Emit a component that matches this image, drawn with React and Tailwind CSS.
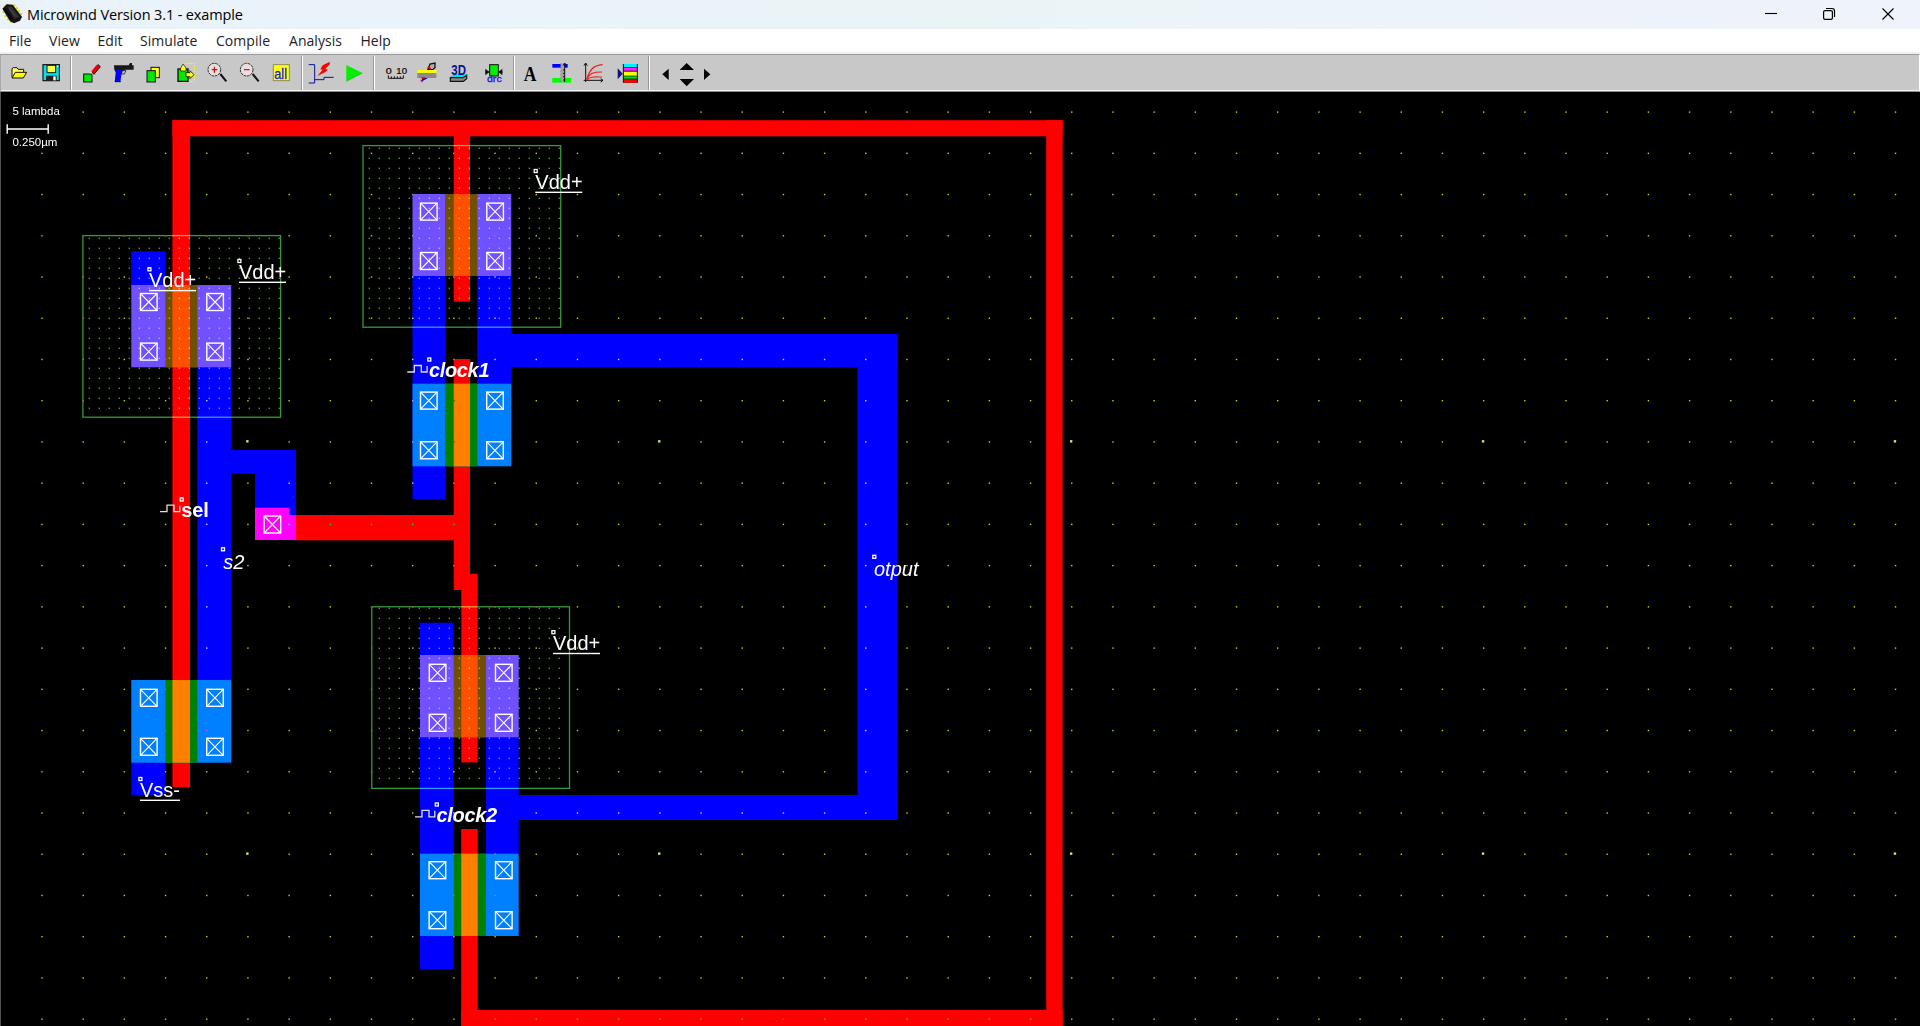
import React from "react";

/* ---------- toolbar ---------- */

/* Every tool occupies a slot; its drawing uses a 3x unit grid over the bar. */
function Tool({ x, w, children }) {
  return (
    <button className="block h-9 shrink-0" style={{ width: w }}>
      <svg className="block h-9 w-full" viewBox={`${x * 3} 165 ${w * 3} 108`}>
        {children}
      </svg>
    </button>
  );
}

function Separator() {
  return (
    <div className="flex h-9 w-1 shrink-0 py-px">
      <div className="w-px" />
      <div className="w-px bg-[#989898]" />
      <div className="w-px bg-white" />
    </div>
  );
}

function Magnifier({ x, plus }) {
  return (
    <g transform={`translate(${x} 0)`}>
      <path d="M40 222 L58 244" stroke="#111" strokeWidth="6" />
      <circle cx="22" cy="209" r="19" fill="#e8e0e0" stroke="#333" strokeWidth="3" strokeDasharray="8 2" />
      <path d="M14 209 H31" stroke="#e00000" strokeWidth="3.5" />
      {plus && <path d="M22 200 V218" stroke="#e00000" strokeWidth="3.5" />}
    </g>
  );
}

function Toolbar() {
  return (
    <div className="flex h-[38px] w-full items-start border-b-[1px] border-t border-b-[#8a8a8a] border-t-[#9a9a9a] border-l border-l-[#a8a8a8] border-r border-r-white bg-[#c8c8c8] shadow-[inset_0_-1px_0_#f4f4f4]">
      <Tool x={1} w={34}>
        <path d="M36 232 V206 L40 203 H51 L54 208 H71 V216" fill="#ffff66" stroke="#111" strokeWidth="3" />
        <path d="M36 234 L46 217 H80 L70 234 Z" fill="#ffff00" stroke="#111" strokeWidth="3" />
      </Tool>
      <Tool x={35} w={34}>
        <rect x="129" y="194" width="49" height="48" fill="#00e5f0" stroke="#111" strokeWidth="3.5" />
        <rect x="141" y="196" width="26" height="22" fill="#ffff40" stroke="#111" strokeWidth="3" />
        <rect x="138" y="227" width="32" height="15" fill="#222" />
        <rect x="160" y="229" width="7" height="12" fill="#fff" />
        <rect x="171" y="197" width="4" height="4" fill="#fff" />
      </Tool>
      <Separator />
      <Tool x={73} w={33}>
        <path d="M268 220 L276 215 L282 223 L274 229 Z" fill="#fff" />
        <path d="M276 216 L294 194 L301 200 L282 223 Z" fill="#e80000" stroke="#111" strokeWidth="3" />
        <path d="M276 215 L293 195" stroke="#ff0000" strokeWidth="5" />
        <rect x="251" y="222" width="25" height="24" fill="#00e800" stroke="#111" strokeWidth="3" />
      </Tool>
      <Tool x={106} w={32}>
        <path d="M342 196 H386 L390 189 H396 V196 H401 V209 H375 L366 222 H350 L343 209 Z" fill="#181818" />
        <path d="M367 212 H378 L373 222 H364 Z" fill="#c8c8c8" stroke="#222" strokeWidth="2.5" />
        <path d="M348 210 H366 L361 246 H344 Z" fill="#0000ff" />
        <path d="M345 245 H362" stroke="#000060" strokeWidth="3" />
      </Tool>
      <Tool x={138} w={32}>
        <rect x="453" y="202" width="25" height="31" fill="#ffff20" stroke="#111" strokeWidth="3" />
        <rect x="441" y="212" width="25" height="34" fill="#00e800" stroke="#111" strokeWidth="3" />
      </Tool>
      <Tool x={170} w={32}>
        <path d="M556 190 H583 V244 H560" fill="none" stroke="#ffff00" strokeWidth="3" strokeDasharray="5 3" />
        <rect x="534" y="207" width="30" height="37" fill="#00e800" stroke="#111" strokeWidth="4" />
        <path d="M549 192 L558 204 V213 H542 V204 Z" fill="#ffff20" stroke="#111" strokeWidth="2" />
        <path d="M582 224 L570 212 V218 H558 V230 H570 V236 Z" fill="#ffff20" stroke="#111" strokeWidth="2.5" />
      </Tool>
      <Tool x={202} w={32}><Magnifier x={621} plus /></Tool>
      <Tool x={234} w={32}><Magnifier x={718} /></Tool>
      <Tool x={266} w={34}>
        <rect x="820" y="194" width="48" height="48" fill="#ffff20" stroke="#8c8c50" strokeWidth="3" />
        <text x="823" y="236" fontSize="45" stroke="#2020d0" strokeWidth="1" textLength="38" lengthAdjust="spacingAndGlyphs" className="fill-[#2020d0] font-['Liberation_Sans']">all</text>
      </Tool>
      <Separator />
      <Tool x={304} w={34}>
        <path d="M926 194 H944 V249 H926 M944 239 H972 V232 H1001" fill="none" stroke="#101090" strokeWidth="3" />
        <path d="M988 186 L968 196 L961 208 L968 209 L952 228 L975 217 L984 209 L976 207 L990 192 Z" fill="#ff0000" />
      </Tool>
      <Tool x={338} w={34}>
        <path d="M1039 195 L1087 219 L1039 244 Z" fill="#00f000" />
        <path d="M1039 244 L1087 219" stroke="#20a020" strokeWidth="2" />
      </Tool>
      <Separator />
      <Tool x={376} w={35}>
        <g stroke="#111" strokeWidth="0.6" className="fill-black font-['Liberation_Sans']">
          <text x="1157" y="221" fontSize="25" textLength="18" lengthAdjust="spacingAndGlyphs">0</text>
          <text x="1189" y="221" fontSize="25" textLength="32" lengthAdjust="spacingAndGlyphs">10</text>
        </g>
        <path d="M1165 226 V235 H1210 V226 M1174 235 V229 M1183 235 V229 M1192 235 V229 M1201 235 V229" fill="none" stroke="#111" strokeWidth="3" />
      </Tool>
      <Tool x={411} w={31}>
        <path d="M1284 208 L1290 192 L1305 189 V203 L1298 209 Z" fill="#b0b0b0" stroke="#111" strokeWidth="4" />
        <path d="M1283 201 L1293 207" stroke="#f00000" strokeWidth="5" />
        <rect x="1252" y="210" width="57" height="9" fill="#ffff00" />
        <rect x="1252" y="219" width="57" height="15" fill="#8a8a8a" />
        <path d="M1268 234 H1284 L1262 246 Z" fill="#0000e0" />
        <path d="M1264 234 H1276" stroke="#f00000" strokeWidth="4" />
        <path d="M1261 240 L1268 246" stroke="#f00000" strokeWidth="3" />
      </Tool>
      <Tool x={442} w={34}>
        <path d="M1351 231 L1364 221 H1402 V235 L1392 243 H1351 Z" fill="#00e0e8" />
        <path d="M1351 233 H1389 L1400 226 V236 L1390 244 H1351 Z" fill="#888" stroke="#111" strokeWidth="3.5" />
        <text x="1354" y="226" fontSize="46" textLength="44" lengthAdjust="spacingAndGlyphs" className="fill-[#101090] font-['Liberation_Sans'] font-bold">3D</text>
      </Tool>
      <Tool x={476} w={36}>
        <path d="M1455 216 H1508" stroke="#111" strokeWidth="3" />
        <path d="M1456 206 L1468 216 L1456 226 Z M1507 206 L1495 216 L1507 226 Z" fill="#111" />
        <rect x="1469" y="194" width="26" height="34" fill="#00f000" stroke="#111" strokeWidth="3" />
        <text x="1461" y="247" fontSize="26" stroke="#1010ff" strokeWidth="0.8" textLength="44" lengthAdjust="spacingAndGlyphs" className="fill-[#1010ff] font-['Liberation_Sans']">drc</text>
      </Tool>
      <Separator />
      <Tool x={516} w={30}>
        <text x="1571" y="242" fontSize="64" textLength="38" lengthAdjust="spacingAndGlyphs" className="fill-black font-['Liberation_Serif'] font-bold">A</text>
      </Tool>
      <Tool x={546} w={32}>
        <rect x="1657" y="192" width="46" height="11" fill="#0000ff" />
        <rect x="1657" y="234" width="56" height="14" fill="#00ff00" />
        <rect x="1682" y="190" width="12" height="57" fill="#a8a8a8" />
        <path d="M1683 190 V246" stroke="#777" strokeWidth="2" strokeDasharray="6 4" />
        <path d="M1694 190 V246" stroke="#111" strokeWidth="3" />
        <path d="M1689 197 L1694 189 L1699 197 M1689 210 H1694 M1689 220 H1694 M1689 230 H1694 M1689 240 H1694" fill="none" stroke="#111" strokeWidth="3" />
      </Tool>
      <Tool x={578} w={32}>
        <path d="M1757 189 V246 M1752 197 L1757 189 L1762 197 M1751 241 H1809 M1802 236 L1809 241 L1802 247" fill="none" stroke="#111" strokeWidth="3" />
        <path d="M1760 238 C1768 214 1776 196 1808 194 M1760 239 C1770 218 1780 216 1806 216 M1762 239 C1772 229 1782 231 1806 231" fill="none" stroke="#f02020" strokeWidth="3.5" />
      </Tool>
      <Tool x={610} w={37}>
        <path d="M1853 205 L1868 221 L1853 238 Z" fill="#101080" />
        <path d="M1869 192 H1913 V248 H1869 Z" fill="#111" />
        <rect x="1871" y="192" width="40" height="10" fill="#00f0ff" />
        <rect x="1871" y="204" width="40" height="8" fill="#ff20ff" />
        <rect x="1871" y="215" width="40" height="12" fill="#ffff00" />
        <rect x="1871" y="229" width="40" height="7" fill="#00e000" />
        <rect x="1871" y="238" width="40" height="10" fill="#ff0000" />
        <path d="M1870 192 V248 M1912 192 V248" stroke="#102080" strokeWidth="3" />
      </Tool>
      <Separator />
      <Tool x={651} w={22}><path d="M1987 223 L2006 206 V240 Z" fill="#000" /></Tool>
      <Tool x={673} w={27}>
        <path d="M2039 210 L2060 189 L2082 210 Z M2039 237 H2082 L2060 259 Z" fill="#000" />
      </Tool>
      <Tool x={700} w={22}><path d="M2112 206 L2131 223 L2112 240 Z" fill="#000" /></Tool>
    </div>
  );
}

/* ---------- title and menus ---------- */

function ChipIcon() {
  return (
    <svg className="h-[29px] w-6" viewBox="0 0 72 87">
      <path d="M12 22 L24 14 M8 38 L13 34 M14 50 L20 45 M22 60 L27 55 M31 68 L35 63 M40 14 L45 19 M48 22 L53 27 M55 31 L60 35 M61 40 L66 43 M58 58 L65 50" stroke="#e0d800" strokeWidth="6" />
      <path d="M7 26 L20 13 L38 14 L66 50 L60 62 L42 70 L30 64 Z" fill="#141414" />
      <path d="M22 20 L34 18 L58 50 L44 56 Z" fill="#303030" />
      <path d="M14 28 L38 60" stroke="#050505" strokeWidth="5" />
      <path d="M28 25 L46 48" stroke="#4c4c4c" strokeWidth="3" />
    </svg>
  );
}

function TitleBar() {
  return (
    <header className="flex h-[29px] items-center justify-between bg-linear-to-r from-[#eaf3fb] via-[#eaf4f7] to-[#eff3fb]">
      <div className="flex items-center">
        <ChipIcon />
        <h1 className="ml-[3px] whitespace-nowrap text-[14.5px] font-normal leading-[28px] tracking-[-0.13px] text-black">Microwind Version 3.1 - example</h1>
      </div>
      <div className="flex h-full items-center">
        <svg className="h-[29px] w-[58px]" viewBox="0 0 58 29"><path d="M23 13.5 H35" stroke="#000" strokeWidth="1.1" /></svg>
        <svg className="h-[29px] w-[59px]" viewBox="0 0 59 29" fill="none" stroke="#000" strokeWidth="1.2">
          <rect x="23.6" y="10.6" width="8.8" height="8.8" rx="1.4" />
          <path d="M26 8.5 H32 Q34.5 8.5 34.5 11 V17" />
        </svg>
        <svg className="h-[29px] w-[61px]" viewBox="0 0 61 29"><path d="M23.5 8.5 L34.5 19.5 M34.5 8.5 L23.5 19.5" stroke="#000" strokeWidth="1.2" /></svg>
      </div>
    </header>
  );
}

function MenuBar() {
  const item = "shrink-0 whitespace-nowrap";
  return (
    <nav className="flex h-[25px] items-start bg-white pl-[9px] text-[14px] leading-[23px] tracking-[0.05px] text-[#222] shadow-[inset_0_-2px_0_#f0f0f0]">
      <span className={`${item} w-10`}>File</span>
      <span className={`${item} w-[48.5px]`}>View</span>
      <span className={`${item} w-[42.5px]`}>Edit</span>
      <span className={`${item} w-[76px]`}>Simulate</span>
      <span className={`${item} w-[73px]`}>Compile</span>
      <span className={`${item} w-[71.5px]`}>Analysis</span>
      <span className={item}>Help</span>
    </nav>
  );
}

/* ---------- chip layout ---------- */

/* Rectangles are [left, top, right, bottom]. */
const METAL = [
  [131.3, 251.3, 165.3, 285], [197.3, 367, 231.3, 680], [131.3, 762, 165.3, 795],
  [231, 450, 296, 473.7], [255, 450, 296, 515],
  [412.5, 276, 445, 499], [477.3, 276, 511.3, 384],
  [511, 334, 897.4, 367.3], [857.5, 334, 897.4, 820], [518, 795, 897.4, 820],
  [420, 622.7, 453.7, 969], [486, 737, 518.7, 854],
];

const POLY = [
  [172.4, 120.2, 1062.6, 136.3], [172.4, 120.2, 190, 787.3], [1046.2, 120.2, 1062.6, 1026],
  [461.2, 1010, 1062.6, 1026], [461.2, 829, 477.7, 1026],
  [453.7, 136, 470, 301.6], [453.7, 359, 470, 590], [296, 515, 454, 540.3],
  [461.3, 573.7, 477.7, 762.4],
];

const VIA = [[255, 507.7, 289, 540], [255, 515, 296, 540]];

/* Transistors: outer left/right, channel left/right, gate left/right, top/bottom. */
const DEVICES = [
  { p: true, x: [131.3, 231.3], c: [165.3, 197.3], g: [172.4, 190], y: [285, 367.3] },
  { p: false, x: [131.3, 231.3], c: [165.3, 197.3], g: [172.4, 190], y: [680, 762.7] },
  { p: true, x: [412.5, 511.3], c: [445, 477.3], g: [453.7, 470], y: [194, 276] },
  { p: false, x: [412.5, 511.3], c: [445, 477.3], g: [453.7, 470], y: [383.7, 466.3] },
  { p: true, x: [420, 518.7], c: [453.7, 486], g: [461.3, 477.7], y: [655, 737.3] },
  { p: false, x: [420, 518.7], c: [453.7, 486], g: [461.3, 477.7], y: [853.7, 936] },
];

const CONTACTS = [
  [140, 293], [206.3, 293], [140, 342.6], [206.3, 342.6],
  [140, 688.8], [206.2, 688.8], [140, 737.8], [206.2, 737.8],
  [420, 202.6], [486.3, 202.6], [420, 252], [486.3, 252],
  [420, 391.6], [486.2, 391.6], [420, 441.3], [486.2, 441.3],
  [428.8, 663.8], [495, 663.8], [428.8, 713.8], [495, 713.8],
  [428.6, 861.2], [495, 861.2], [428.6, 911.2], [495, 911.2],
  [263.6, 515.5],
];

const WELLS = [
  { x: 82.9, y: 235.6, w: 197.7, h: 181.6, dx: 89.3, dy: 238.3, cols: 20 },
  { x: 363, y: 145.6, w: 197.7, h: 181.6, dx: 369.3, dy: 148.3, cols: 20 },
  { x: 371.8, y: 606.8, w: 197.7, h: 181.6, dx: 379.3, dy: 608.3, cols: 19 },
];

const SUPPLIES = [
  { t: "Vdd+", x: 149, y: 287.3, w: 47 }, { t: "Vdd+", x: 239, y: 279, w: 47 },
  { t: "Vdd+", x: 535.3, y: 189, w: 47 }, { t: "Vdd+", x: 553, y: 650.2, w: 47 },
  { t: "Vss-", x: 140, y: 797, w: 40 },
];

function Box({ r, fill }) {
  return <rect x={r[0]} y={r[1]} width={r[2] - r[0]} height={r[3] - r[1]} fill={fill} />;
}

function Device({ d }) {
  const [top, bottom] = d.y;
  return (
    <g>
      <Box r={[d.x[0], top, d.x[1], bottom]} fill={d.p ? "#7050ff" : "#0080ff"} />
      <Box r={[d.c[0], top, d.c[1], bottom]} fill={d.p ? "#705000" : "#008000"} />
      <Box r={[d.g[0], top, d.g[1], bottom]} fill={d.p ? "#ff5000" : "#ff8000"} />
    </g>
  );
}

function Well({ w }) {
  const dots = [];
  for (let r = 0; r < 18; r++)
    for (let c = 0; c < w.cols; c++) {
      dots.push(<rect key={`${r}-${c}`} x={w.dx + c * 10 - 0.65} y={w.dy + r * 10 - 0.65} width="1.3" height="1.3" fill="#48b048" />);
    }
  return (
    <g className="mix-blend-screen">
      <rect x={w.x} y={w.y} width={w.w} height={w.h} fill="none" stroke="#389838" strokeWidth="1.3" />
      {dots}
    </g>
  );
}

function Grid() {
  const dots = [];
  for (let r = 0; r < 23; r++)
    for (let c = 0; c < 46; c++) {
      if (r === 0 && c === 0) continue;
      const major = c % 10 === 5 && (r === 8 || r === 18);
      const s = major ? 2.4 : 1.4;
      const shift = major ? -0.6 : 0;
      dots.push(
        <rect key={`${r}-${c}`} x={42 + c * 41.19 - s / 2 + shift} y={112.1 + r * 41.23 - s / 2 + shift} width={s} height={s} fill={major ? "#e0e070" : "#d0d000"} />
      );
    }
  return <g className="mix-blend-difference">{dots}</g>;
}

function Marker({ x, y }) {
  return <rect x={x - 1.5} y={y - 1.5} width="3" height="3" fill="none" stroke="#fff" strokeWidth="1.3" />;
}

function Pulse({ x, y }) {
  return <path d={`M${x} ${y} h7 v-6.5 h7 v6.5 h5.8 v-6`} fill="none" stroke="#e0e0e0" strokeWidth="1.3" />;
}

function Layout() {
  return (
    <svg className="isolate block h-[934px] w-full bg-black font-['Liberation_Sans']" viewBox="0 92 1920 934">
      <rect x="0" y="92" width="1920" height="934" fill="#000" />
      <rect x="0" y="92" width="1" height="934" fill="#505050" />
      {METAL.map((r, i) => <Box key={i} r={r} fill="#0000ff" />)}
      {POLY.map((r, i) => <Box key={i} r={r} fill="#ff0000" />)}
      {VIA.map((r, i) => <Box key={i} r={r} fill="#ff00ff" />)}
      {DEVICES.map((d, i) => <Device key={i} d={d} />)}
      {WELLS.map((w, i) => <Well key={i} w={w} />)}
      <Grid />
      <g fill="none" stroke="#fff">
        {CONTACTS.map(([x, y], i) => (
          <g key={i} transform={`translate(${x} ${y})`}>
            <rect x="0.5" y="0.5" width="16.6" height="17" strokeWidth="1.4" />
            <path d="M0.5 0.5 L17 17.5 M17 0.5 L0.5 17.5" strokeWidth="1.1" />
          </g>
        ))}
      </g>
      <g fill="#fff" fontSize="20">
        {SUPPLIES.map((s, i) => (
          <g key={i}>
            <Marker x={s.x + 0.4} y={s.y - 18} />
            <text x={s.x} y={s.y}>{s.t}</text>
            <rect x={s.x} y={s.y + 2.6} width={s.w} height="1.4" />
          </g>
        ))}
        <Marker x={429.3} y={359.5} />
        <Pulse x={407.3} y={372} />
        <text x="429" y="377.2" className="font-bold italic" textLength="60.5">clock1</text>
        <Marker x={436.8} y={804.5} />
        <Pulse x={415} y={816.8} />
        <text x="436.6" y="822" className="font-bold italic" textLength="60.5">clock2</text>
        <Marker x={181.7} y={499.5} />
        <Pulse x={160} y={511.7} />
        <text x="181.3" y="517.4" className="font-bold" textLength="27.6">sel</text>
        <Marker x={223} y={549.3} />
        <text x="223.3" y="568.5" className="italic">s2</text>
        <Marker x={874.3} y={556.8} />
        <text x="874" y="576.3" className="italic">otput</text>
      </g>
      <g fill="#fff" fontSize="11.5">
        <text x="12.4" y="115.3" textLength="47.4">5 lambda</text>
        <path d="M6.7 129 H48.5 M7.2 124.3 V133.7 M48.2 124.3 V133.7" stroke="#fff" strokeWidth="1.4" />
        <text x="12.4" y="146.3" textLength="45">0.250µm</text>
      </g>
    </svg>
  );
}

export default function App() {
  return (
    <div className="flex h-[1026px] w-[1920px] flex-col overflow-hidden bg-black font-['Open_Sans','Noto_Sans',sans-serif]">
      <TitleBar />
      <MenuBar />
      <Toolbar />
      <Layout />
    </div>
  );
}
